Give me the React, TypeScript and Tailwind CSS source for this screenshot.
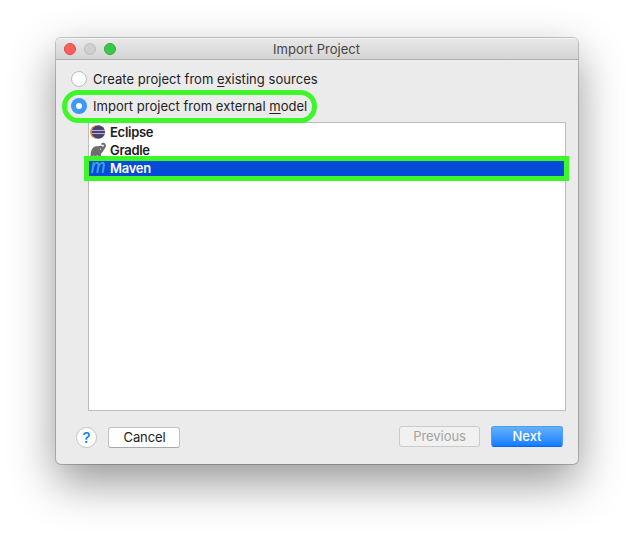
import type { ReactNode } from "react";

function TrafficLight({ tone }: { tone: string }) {
  return <span className={`size-3 rounded-full border ${tone}`} />;
}

function EclipseIcon() {
  return (
    <svg width="16" height="16" viewBox="0 0 16 16">
      <circle cx="7" cy="8" r="7" fill="#f7942a" />
      <circle cx="8.9" cy="8" r="7.3" fill="#fff" />
      <circle cx="8.3" cy="8" r="6.8" fill="#4a4174" />
      <path d="M1.600 6.500h13.400M1.600 9.500h13.400" stroke="#bbb6cf" strokeWidth="1" />
    </svg>
  );
}

function GradleIcon() {
  return (
    <svg width="16" height="16" viewBox="0 0 16 16">
      <path
        d="M.6 15.500C.3 11 1.200 7.300 3.500 5.300C5.300 4 7.600 4.500 9.400 4C11.100 3.600 12.300 4.200 13 4.700C13.900 4.200 14.100 3.300 13.600 2.900C13.200 2.500 12.600 2.700 12.200 3.100L10.900 1.900C12 .6 13.900.3 15.100 1.500C16.400 2.900 16 5.300 14.700 6.700C13.400 8.100 13.500 9.700 12.100 10.400C11.200 10.800 10.900 11.600 10.900 15.500H8.700C8.700 13.900 8.300 13.200 7.500 13.200S6.400 13.900 6.400 15.500H4.700C4.700 14 4.300 13.500 3.700 13.500S2.700 14.200 2.700 15.500Z"
        fill="#6e6e6e"
      />
      <circle cx="10.4" cy="7.2" r="0.6" fill="#e8e8e8" />
    </svg>
  );
}

function MavenIcon() {
  return (
    <svg width="16" height="16" viewBox="0 0 16 16" className="overflow-visible">
      <text
        x="0.6"
        y="12.6"
        textLength="15"
        lengthAdjust="spacingAndGlyphs"
        className="fill-[#38a4e2] font-['Open_Sans'] text-[20px] font-semibold italic"
      >
        m
      </text>
    </svg>
  );
}

function ModelRow({ icon, label, selected = false }: { icon: ReactNode; label: string; selected?: boolean }) {
  return (
    <li
      className={`flex h-[18px] items-center gap-1 pl-px text-[13px] font-semibold tracking-[-0.28px] ${
        selected ? "bg-[#064ad9] text-white" : "text-[#1c1c1c]"
      }`}
    >
      {icon}
      <span>{label}</span>
    </li>
  );
}

export default function App() {
  return (
    <div className="flex h-[538px] w-[634px] items-start overflow-hidden bg-white pt-[38px] pl-14 font-['Inter',sans-serif] text-[13px] leading-4 text-[#222]">
      <main className="flex h-[426px] w-[522px] flex-col rounded-[5px] bg-[#ebebeb] shadow-[0_0_0_1px_rgba(0,0,0,0.2),0_18px_46px_0_rgba(0,0,0,0.42)]">
        <header className="relative flex h-[22px] shrink-0 items-center gap-2 rounded-t-[5px] border-t border-b border-t-[#f5f5f5] border-b-[#b1b1b1] bg-linear-to-b from-[#e8e8e8] to-[#d4d4d4] pl-2">
          <TrafficLight tone="border-[#e2463f] bg-[#fc605b]" />
          <TrafficLight tone="border-[#bdbdbd] bg-[#cfcfcf]" />
          <TrafficLight tone="border-[#2dac2f] bg-[#3ac84a]" />
          <h1 className="absolute inset-x-0 pr-px text-center text-[13px] text-[#464646]">Import Project</h1>
        </header>

        <section className="flex flex-col pt-[11px] pl-[15px]">
          <label className="flex h-4 items-center gap-1.5">
            <span className="size-4 rounded-full border border-[#bcbcbc] bg-white" />
            <span className="tracking-[0.035px]">
              Create project from <u className="underline-offset-2">e</u>xisting sources
            </span>
          </label>
          <label className="relative mt-[11px] flex h-4 items-center gap-1.5">
            <span className="flex size-4 items-center justify-center rounded-full bg-[#3b99fc]">
              <span className="size-1.5 rounded-full bg-white" />
            </span>
            <span className="tracking-[0.02px]">
              Import project from external <u className="underline-offset-2">m</u>odel
            </span>
            <span className="absolute -top-2 -left-[9px] z-10 h-[33px] w-[255px] rounded-full border-5 border-[#3df72b]" />
          </label>
        </section>

        <div className="relative mt-2 ml-8 h-[289px] w-[478px] border border-[#bdbdbd] bg-white">
          <ul>
            <ModelRow icon={<EclipseIcon />} label="Eclipse" />
            <ModelRow icon={<GradleIcon />} label="Gradle" />
            <ModelRow icon={<MavenIcon />} label="Maven" selected />
          </ul>
          <span className="absolute top-[33px] -left-[5px] h-[25px] w-[485px] border-5 border-[#3df72b]" />
        </div>

        <footer className="flex items-start pt-[15px] pr-[15px] pl-5">
          <button className="mt-px flex size-[21px] items-center justify-center rounded-full border border-[#c4c4c4] bg-white text-[15px] font-medium text-[#0a7cff]">
            ?
          </button>
          <button className="mt-px ml-[11px] h-[21px] w-[72px] rounded-[3px] border border-[#c2c2c2] border-b-[#a8a8a8] bg-white pl-px leading-[19px] tracking-[-0.1px]">
            Cancel
          </button>
          <button className="ml-auto h-[21px] w-[81px] rounded-[3px] border border-[#cbcbcb] bg-[#f1f1f1] leading-[19px] tracking-[-0.05px] text-[#a3a3a3]">
            Previous
          </button>
          <button className="ml-[11px] h-[21px] w-[72px] rounded-[3px] border border-[#4a9ff9] border-b-[#0a62f5] bg-linear-to-b from-[#64b0fb] to-[#0c7cff] leading-[19px] font-medium text-white">
            Next
          </button>
        </footer>
      </main>
    </div>
  );
}
